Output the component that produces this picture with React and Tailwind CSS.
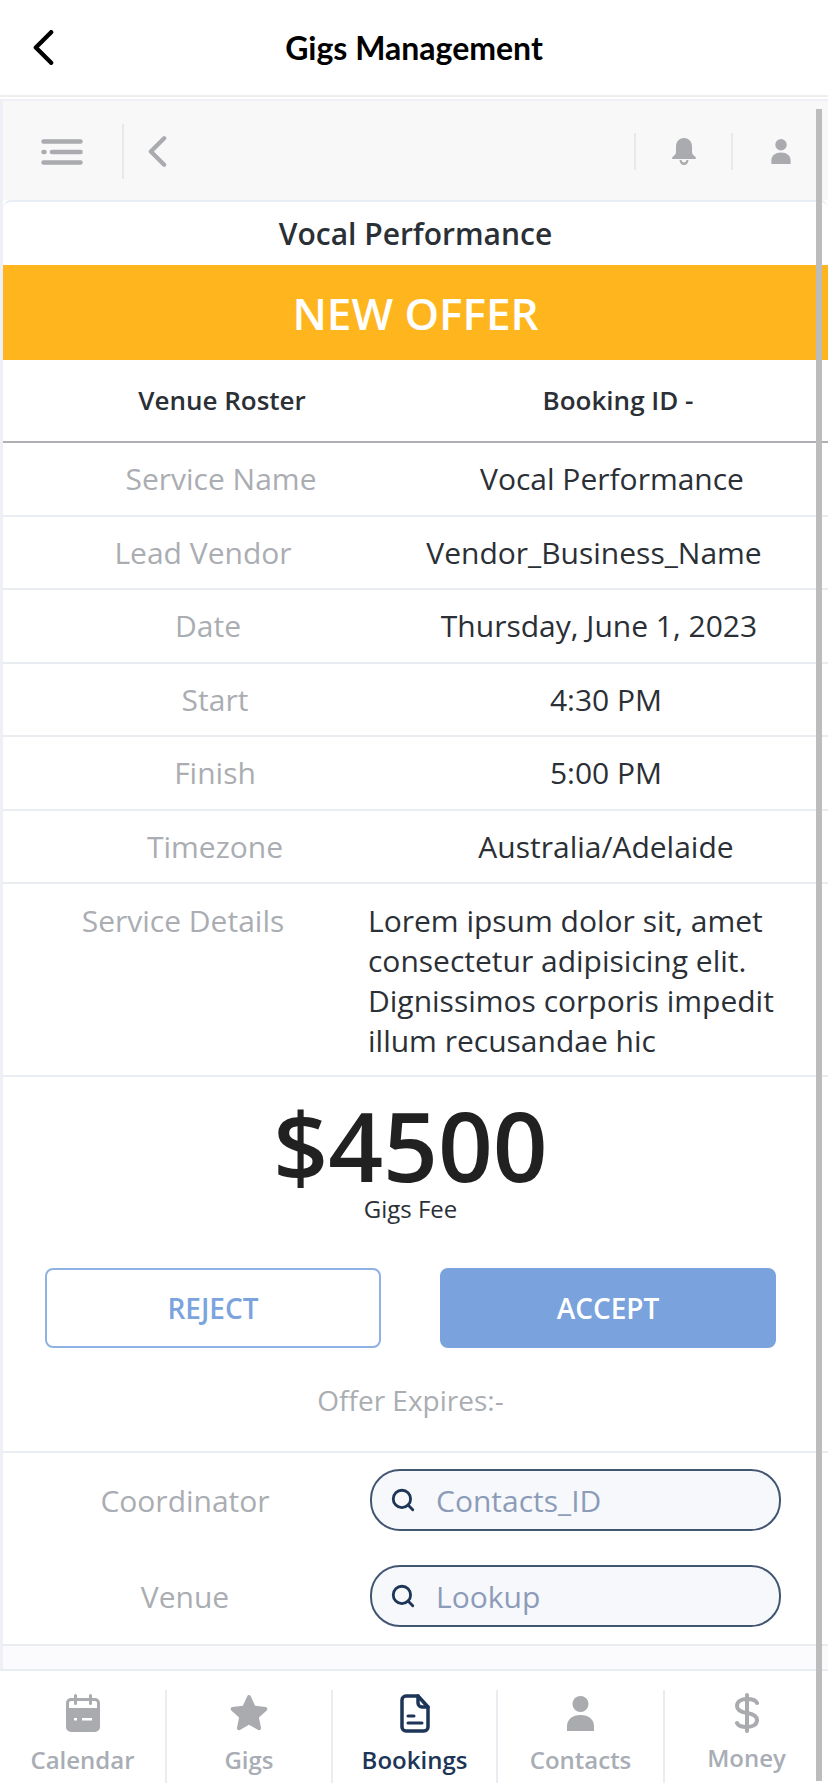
import { Search } from "lucide-react";

const font = "font-['Open_Sans',sans-serif]";

// Each row sets its own box widths, the labels and values don't share a column centre.
const ROWS = [
  { label: "Service Name", value: "Vocal Performance", lw: "w-[436px]", vw: "w-[346px]" },
  { label: "Lead Vendor", value: "Vendor_Business_Name", lw: "w-[400px]", vw: "w-[382px]" },
  { label: "Date", value: "Thursday, June 1, 2023", lw: "w-[410px]", vw: "w-[372px]" },
  { label: "Start", value: "4:30 PM", lw: "w-[424px]", vw: "w-[358px]" },
  { label: "Finish", value: "5:00 PM", lw: "w-[424px]", vw: "w-[358px]" },
  { label: "Timezone", value: "Australia/Adelaide", lw: "w-[424px]", vw: "w-[358px]" },
];

function ListIcon() {
  return (
    <svg width="42" height="26" viewBox="0 0 42 26" fill="none" stroke="#a9abae" strokeWidth="4.500" strokeLinecap="round">
      <path d="M2.500 2.500h37M11 13h28.500M2.500 23.500h37M2.500 13h1" />
    </svg>
  );
}

function Chevron({ className, color, width }) {
  return (
    <svg className={className} viewBox="0 0 20 32" fill="none" stroke={color} strokeWidth={width} strokeLinecap="round" strokeLinejoin="round">
      <path d="M17 2 3 16l14 14" />
    </svg>
  );
}

function BellIcon() {
  return (
    <svg width="24" height="27" viewBox="0 0 24 27" fill="#a9abae">
      <path d="M12 0c5 0 8 3.500 8 9v5c0 2 1.500 3.500 3.500 5 .8.700.4 2-.7 2H1.200c-1.100 0-1.500-1.300-.7-2C2.500 17.500 4 16 4 14V9c0-5.500 3-9 8-9z" />
      <path d="M7.500 22h2c.2 1.500 1.200 2.500 2.500 2.500s2.300-1 2.500-2.500h2c-.2 3-2 5-4.500 5s-4.300-2-4.500-5z" />
    </svg>
  );
}

function PersonIcon({ w, h }) {
  return (
    <svg width={w} height={h} viewBox="0 0 27 35" fill="#a9abae">
      <circle cx="13.500" cy="8" r="8" />
      <path d="M0 35v-5c0-6.500 5.500-11 13.500-11S27 23.500 27 30v5z" />
    </svg>
  );
}

function CalendarIcon() {
  return (
    <svg width="34" height="38" viewBox="0 0 34 38" fill="#a9abae">
      <path fillRule="evenodd" d="M5 4h3V1.500a1.500 1.500 0 0 1 3 0V4h12V1.500a1.500 1.500 0 0 1 3 0V4h3a5 5 0 0 1 5 5v24a5 5 0 0 1-5 5H5a5 5 0 0 1-5-5V9a5 5 0 0 1 5-5zM3 14h28V9a2 2 0 0 0-2-2h-3v2.500a1.500 1.500 0 0 1-3 0V7H11v2.500a1.500 1.500 0 0 1-3 0V7H5a2 2 0 0 0-2 2z" />
      <path fill="#fff" d="M8 24h3v2.500H8zM16 24h10v2.500H16z" />
    </svg>
  );
}

function StarIcon() {
  return (
    <svg width="38" height="37" viewBox="0 0 38 37" fill="#a9abae">
      <path d="M17.200 1.200c.7-1.500 2.900-1.500 3.600 0l4.300 9.600 10.500 1.200c1.700.2 2.300 2.300 1.100 3.400l-7.800 7.100 2.100 10.300c.3 1.700-1.400 2.900-2.900 2.100L19 29.700 9.900 34.900c-1.500.8-3.200-.4-2.900-2.100l2.100-10.300-7.800-7.100C.1 14.300.7 12.200 2.400 12l10.500-1.200z" />
    </svg>
  );
}

function DocIcon() {
  return (
    <svg width="30" height="39" viewBox="0 0 30 39" fill="none" stroke="#1d3557" strokeWidth="3.500" strokeLinejoin="round" strokeLinecap="round">
      <path d="M6 2h12l10 11v20a4 4 0 0 1-4 4H6a4 4 0 0 1-4-4V6a4 4 0 0 1 4-4z" />
      <path d="M18 2v7a4 4 0 0 0 4 4h6" />
      <path d="M8 22h6M8 29h14" strokeWidth="3" />
    </svg>
  );
}

function DollarIcon() {
  return (
    <svg width="24" height="40" viewBox="0 0 24 40" fill="none" stroke="#a9abae" strokeWidth="4" strokeLinecap="round">
      <path d="M12 2v36" />
      <path d="M22 10c-1-2.500-5-4-10-4C6 6 2 8.500 2 13c0 4.500 4 6 10 7s10 2.500 10 7c0 4.500-4 7-10 7-5 0-9-1.500-10-4" />
    </svg>
  );
}

function TopBar() {
  return (
    <div className="flex h-[99px] items-center bg-[#f8f8f8] pl-[38px] pt-[2px]">
      <ListIcon />
      <div className="ml-[39px] h-[55px] border-l-2 border-[#e8e8e8]" />
      <Chevron className="ml-[24px] h-[35px] w-[19px]" color="#a9abae" width="4.500" />
      <div className="ml-auto h-[37px] border-l-2 border-[#e8e8e8]" />
      <div className="ml-[36px]"><BellIcon /></div>
      <div className="ml-[35px] h-[37px] border-l-2 border-[#e8e8e8]" />
      <div className="ml-[38px] mr-[37px]"><PersonIcon w={20} h={25} /></div>
    </div>
  );
}

function DetailsTable() {
  return (
    <div>
      {ROWS.map((r) => (
        <div key={r.label} className="flex h-[73.500px] items-center border-b-2 border-[#e9ecf1] text-[30px]">
          <div className={`${r.lw} text-center text-[#aaadb2]`}>{r.label}</div>
          <div className={`${r.vw} text-center text-[#2b2f36]`}>{r.value}</div>
        </div>
      ))}
      <div className="flex h-[193px] border-b-2 border-[#e9ecf1] pt-[17px] text-[30px] leading-[40px]">
        <div className="w-[360px] text-center text-[#aaadb2]">Service Details</div>
        <div className="ml-[5px] w-[420px] text-[#2b2f36]">
          Lorem ipsum dolor sit, amet consectetur adipisicing elit. Dignissimos corporis impedit illum recusandae hic
        </div>
      </div>
    </div>
  );
}

function FeeBlock() {
  return (
    <div className="flex h-[376px] flex-col items-center border-b-2 border-[#e9ecf1]">
      <div className="mr-[10px] mt-[20px] h-[96px] text-[96px] font-semibold leading-[96px] text-[#212121]">$4500</div>
      <div className="mr-[10px] text-[24px] font-medium leading-[32px] text-[#2b2f36]">Gigs Fee</div>
      <div className="mt-[43px] flex w-full pl-[42px]">
        <button className="flex h-[80px] w-[336px] items-center justify-center rounded-lg border-2 border-[#8fb2e4] text-[28px] font-semibold text-[#7ba3de]">
          REJECT
        </button>
        <button className="ml-[59px] flex h-[80px] w-[336px] items-center justify-center rounded-lg bg-[#7aa2dd] text-[28px] font-semibold text-white">
          ACCEPT
        </button>
      </div>
      <div className="mr-[10px] mt-[32px] text-[28px] leading-[40px] text-[#aaadb2]">Offer Expires:-</div>
    </div>
  );
}

function LookupRow({ label, placeholder }) {
  return (
    <div className="flex items-center">
      <div className="w-[364px] text-center text-[30px] text-[#aaadb2]">{label}</div>
      <div className="ml-[3px] flex h-[62px] w-[411px] items-center rounded-[30px] border-2 border-[#425673] bg-[#f6f8fc] pl-[18px]">
        <Search size={26} strokeWidth={2.6} color="#1d3557" />
        <span className="ml-[20px] text-[30px] text-[#8c9cb8]">{placeholder}</span>
      </div>
    </div>
  );
}

const NAV = [
  { label: "Calendar", icon: <CalendarIcon /> },
  { label: "Gigs", icon: <StarIcon /> },
  { label: "Bookings", icon: <DocIcon />, active: true },
  { label: "Contacts", icon: <PersonIcon w={27} h={35} /> },
  { label: "Money", icon: <DollarIcon />, last: true },
];

function BottomNav() {
  return (
    <div className="grid h-[122px] grid-cols-[167px_166px_165px_167px_1fr] border-t-2 border-[#e9ecf1] bg-white pb-[8px] pt-[19px]">
      {NAV.map((n) => (
        <div key={n.label} className={n.last ? "flex flex-col items-center pt-[3px]" : "flex flex-col items-center border-r-2 border-[#e9ecf1] pt-[3px]"}>
          <div className="flex h-[40px] items-center">{n.icon}</div>
          <div
            className={
              (n.active ? "text-[#1d3557] " : "text-[#a9adb5] ") +
              (n.last ? "mt-[10px] " : "mt-[12px] ") +
              "text-[24px] font-semibold leading-[30px]"
            }
          >
            {n.label}
          </div>
        </div>
      ))}
    </div>
  );
}

export default function App() {
  return (
    <div className={`${font} relative flex h-[1791px] w-[828px] flex-col overflow-hidden bg-white`}>
      <div className="relative flex h-[97px] items-center justify-center border-b-2 border-[#eeeeee]">
        <Chevron className="absolute left-[32px] top-[30px] h-[35px] w-[23px]" color="#000" width="4" />
        <h1 className="font-['Lato',sans-serif] text-[32px] font-bold text-black">Gigs Management</h1>
      </div>

      <div className="mt-[2px] flex min-h-0 flex-1 flex-col border-l-[3px] border-t-2 border-[#eef0f5]">
        <TopBar />
        <div className="rounded-t-lg border-t-2 border-[#e9eef6] bg-white">
          <div className="flex h-[63px] items-center justify-center text-[30px] font-semibold text-[#2b2f36]">Vocal Performance</div>
          <div className="flex h-[95px] items-center justify-center bg-[#ffb61e] text-[44px] font-semibold text-white">NEW OFFER</div>
          <div className="flex h-[83px] items-center border-b-2 border-[#aeb0b3] text-[26px] font-semibold text-[#2b2f36]">
            <div className="w-[438px] text-center">Venue Roster</div>
            <div className="w-[354px] text-center">Booking ID -</div>
          </div>
          <DetailsTable />
          <FeeBlock />
          <div className="flex flex-col gap-[34px] border-b-2 border-[#e9ecf1] pb-[17px] pt-[16px]">
            <LookupRow label="Coordinator" placeholder="Contacts_ID" />
            <LookupRow label="Venue" placeholder="Lookup" />
          </div>
        </div>
        <div className="flex-1 bg-[#fbfbfd]" />
      </div>

      <BottomNav />

      {/* scrollbar of the embedded page */}
      <div className="absolute left-[816px] top-[109px] h-[1672px] w-[6px] bg-[#bcbcbc]" />
    </div>
  );
}
